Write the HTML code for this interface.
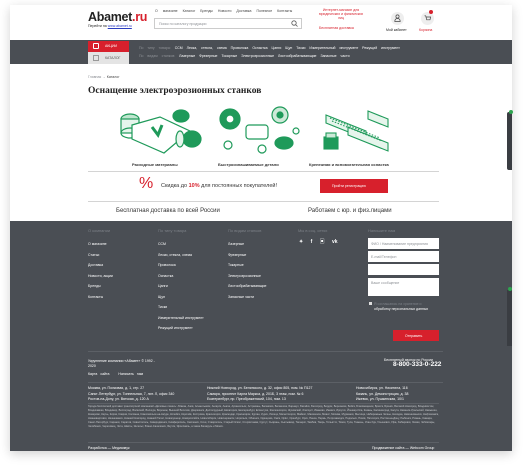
<!DOCTYPE html>
<html><head><meta charset="utf-8">
<style>
*{margin:0;padding:0;box-sizing:border-box}
body{width:524px;height:466px;background:#fff;position:relative;overflow:hidden;font-family:"Liberation Sans","Noto Sans CJK SC",sans-serif;color:#222}
.a{position:absolute;white-space:nowrap}
.card{position:absolute;left:10px;top:5px;width:502px;height:446px;background:#fff;box-shadow:0 3px 10px rgba(0,0,0,.18)}
.t3{font-size:3.5px}
.t4{font-size:4px}
.w{color:#fff}
.g{color:#8e9196}
.dark{background:#4a4e54}
</style></head><body>
<div class="card"></div>
<div class="a" style="left:88px;top:10px;font-size:12.5px;font-weight:bold;color:#222;letter-spacing:-.3px">Abamet<span style="color:#d7202c">.ru</span></div>
<div class="a t3" style="left:88px;top:24px">Перейти на <span style="color:#2a3cc0;text-decoration:underline">www.abamet.ru</span></div>
<div class="a t3" style="left:155px;top:9px;color:#444;word-spacing:4px">О магазине Каталог Бренды Новости Доставка Полезное Контакты</div>
<div class="a" style="left:154px;top:18px;width:148px;height:11px;border:1px solid #ccc"></div>
<div class="a t3 g" style="left:159px;top:22px">Поиск по каталогу продукции</div>
<svg class="a" style="left:291px;top:20px" width="7" height="7" viewBox="0 0 7 7"><circle cx="3" cy="3" r="2.2" fill="none" stroke="#555" stroke-width=".8"/><path d="M4.6 4.6L6.5 6.5" stroke="#555" stroke-width=".8"/></svg>
<div class="a t3" style="left:318px;top:8px;color:#d7202c;text-align:center;line-height:4px;width:46px;white-space:normal">Интернет-магазин для юридических и физических лиц</div>
<div class="a t3" style="left:319px;top:26px;color:#d7202c">Бесплатная доставка</div>
<div class="a" style="left:391px;top:12px;width:13px;height:13px;border-radius:50%;background:#eee"></div>
<svg class="a" style="left:394px;top:14px" width="7" height="8" viewBox="0 0 7 8"><circle cx="3.5" cy="2.5" r="1.6" fill="none" stroke="#444" stroke-width=".7"/><path d="M.8 7.5c0-2 1.2-3 2.7-3s2.7 1 2.7 3z" fill="none" stroke="#444" stroke-width=".7"/></svg>
<div class="a t3" style="left:386px;top:28px">Мой кабинет</div>
<div class="a" style="left:421px;top:12px;width:13px;height:13px;border-radius:50%;background:#eee"></div>
<div class="a" style="left:429px;top:10px;width:4px;height:4px;border-radius:50%;background:#d7202c"></div>
<svg class="a" style="left:424px;top:15px" width="7" height="7" viewBox="0 0 7 7"><path d="M.5 .8h1.2l1 4h3.3l.6-2.8H2" fill="none" stroke="#444" stroke-width=".7"/></svg>
<div class="a t3" style="left:419px;top:28px;color:#d7202c">Корзина</div>
<div class="a dark" style="left:10px;top:40px;width:502px;height:24px"></div>
<div class="a" style="left:88px;top:41px;width:41px;height:11px;background:#d7202c"></div>
<div class="a" style="left:93px;top:43px;width:6px;height:6px;border:.6px solid #fff;border-radius:1px"></div>
<div class="a t3 w" style="left:105px;top:44px">АКЦИИ</div>
<div class="a" style="left:88px;top:52px;width:41px;height:12px;background:#e4e4e4"></div>
<div class="a" style="left:93px;top:55px;width:6px;height:6px;border:.6px solid #999"></div>
<div class="a t3" style="left:105px;top:56px;color:#555">КАТАЛОГ</div>
<div class="a t3 w" style="left:139px;top:46px;word-spacing:3px"><span class="g">По типу товара:</span> CCM Леска, стекла, схема Проволока Оснастка Цанги Щуп Тиски Измерительный инструмент Режущий инструмент</div>
<div class="a t3 w" style="left:139px;top:54px;word-spacing:3px"><span class="g">По видам станков:</span> Лазерные Фрезерные Токарные Электроэрозионные Листообрабатывающие Запасные части</div>
<div class="a t3 g" style="left:88px;top:75px">Главная → <span style="color:#444">Каталог</span></div>
<div class="a" style="left:88px;top:86px;font-size:9.5px;font-weight:bold;font-family:'Liberation Serif',serif;color:#222">Оснащение электроэрозионных станков</div>
<svg class="a" style="left:118px;top:105px" width="85" height="52" viewBox="0 0 85 52" fill="none" stroke="#1f9a5a" stroke-width="1.2">
<ellipse cx="12" cy="14" rx="9" ry="5" fill="#bfe6cf"/><rect x="3" y="14" width="18" height="14" fill="#e6f5ec"/><ellipse cx="12" cy="28" rx="9" ry="5"/>
<path d="M14 20l28-8 30 14-26 22-32-14z" fill="#fff"/><path d="M34 22l6 8 4-10" stroke-width="3"/>
<ellipse cx="63" cy="11" rx="8" ry="6" fill="#1f9a5a"/><ellipse cx="74" cy="34" rx="9" ry="8" fill="#1f9a5a"/><ellipse cx="62" cy="34" rx="4" ry="8" fill="#e6f5ec"/></svg>
<svg class="a" style="left:218px;top:105px" width="85" height="52" viewBox="0 0 85 52" fill="none" stroke="#1f9a5a" stroke-width="1.2">
<ellipse cx="12" cy="14" rx="10" ry="10" fill="#1f9a5a"/><circle cx="12" cy="14" r="4" fill="#fff"/>
<rect x="28" y="20" width="22" height="14" rx="3"/><circle cx="62" cy="10" r="8" fill="#cde9d8"/><circle cx="62" cy="10" r="3" fill="#1f9a5a"/>
<ellipse cx="66" cy="38" rx="9" ry="6" fill="#1f9a5a"/><circle cx="10" cy="40" r="4"/><circle cx="44" cy="44" r="4"/><circle cx="78" cy="26" r="3"/></svg>
<svg class="a" style="left:318px;top:105px" width="85" height="52" viewBox="0 0 85 52" fill="none" stroke="#1f9a5a" stroke-width="1.1">
<path d="M8 10l40 16v8L8 18z" fill="#e6f5ec"/><path d="M30 22l40 16v8L30 30z" fill="#e6f5ec"/><path d="M50 6l20 8v8l-20-8z" fill="#e6f5ec"/>
<path d="M12 13l50 20M14 16l50 20" stroke-dasharray="1.5 1.5"/><rect x="6" y="32" width="14" height="12" fill="#1f9a5a"/><rect x="8" y="28" width="10" height="5" fill="#cde9d8"/></svg>
<div class="a t4" style="left:132px;top:162px;color:#333;font-weight:bold">Расходные материалы</div>
<div class="a t4" style="left:218px;top:162px;color:#333;font-weight:bold">Быстроизнашиваемые детали</div>
<div class="a t4" style="left:309px;top:162px;color:#333;font-weight:bold">Крепежная и вспомогательная оснастка</div>
<div class="a" style="left:88px;top:171px;width:351px;height:1px;background:#d4d4d4"></div>
<div class="a" style="left:139px;top:175px;font-size:16px;color:#d7202c">%</div>
<div class="a" style="left:161px;top:183px;font-size:5.5px;color:#333">Скидка до <b style="color:#d7202c">10%</b> для постоянных покупателей!</div>
<div class="a" style="left:320px;top:179px;width:68px;height:14px;background:#d7202c"></div>
<div class="a t3 w" style="left:332px;top:184px">Пройти регистрацию</div>
<div class="a" style="left:88px;top:201px;width:351px;height:1px;background:#d4d4d4"></div>
<div class="a" style="left:116px;top:208px;font-size:6px;color:#333">Бесплатная доставка по всей России</div>
<div class="a" style="left:308px;top:208px;font-size:6px;color:#333">Работаем с юр. и физ.лицами</div>
<div class="a dark" style="left:10px;top:221px;width:502px;height:230px"></div>
<div class="a t4" style="left:88px;top:228px;color:#7c8087">О компании</div>
<div class="a t4" style="left:158px;top:228px;color:#7c8087">По типу товара</div>
<div class="a t4" style="left:228px;top:228px;color:#7c8087">По видам станков</div>
<div class="a t4" style="left:298px;top:228px;color:#7c8087">Мы в соц. сетях</div>
<div class="a t4" style="left:368px;top:228px;color:#7c8087">Напишите нам</div>
<div class="a t3 w" style="left:88px;top:239px;line-height:10.5px;white-space:pre">О магазине
Статьи
Доставка
Новости, акции
Бренды
Контакты</div>
<div class="a t3 w" style="left:158px;top:239px;line-height:10.5px;white-space:pre">CCM
Лески, стекла, схема
Проволока
Оснастка
Цанги
Щуп
Тиски
Измерительный инструмент
Режущий инструмент</div>
<div class="a t3 w" style="left:228px;top:239px;line-height:10.5px;white-space:pre">Лазерные
Фрезерные
Токарные
Электроэрозионные
Листообрабатывающие
Запасные части</div>
<div class="a w" style="left:299px;top:238px;font-size:5px;font-weight:bold;word-spacing:6px">✦ f ▣ vk</div>
<div class="a" style="left:368px;top:238px;width:71px;height:11px;background:#fff"></div>
<div class="a" style="left:368px;top:251px;width:71px;height:11px;background:#fff"></div>
<div class="a" style="left:368px;top:264px;width:71px;height:11px;background:#fff"></div>
<div class="a" style="left:368px;top:278px;width:71px;height:18px;background:#fff"></div>
<div class="a t3 g" style="left:371px;top:242px">ФИО / Наименование предприятия</div>
<div class="a t3 g" style="left:371px;top:255px">E-mail/Телефон</div>
<div class="a t3 g" style="left:371px;top:281px">Ваше сообщение</div>
<div class="a" style="left:369px;top:302px;width:3px;height:3px;background:#ddd"></div>
<div class="a t3" style="left:374px;top:302px;color:#7c8087">Я соглашаюсь на хранение и</div>
<div class="a t3 w" style="left:374px;top:307px">обработку персональных данных</div>
<div class="a" style="left:393px;top:330px;width:46px;height:11px;background:#d7202c"></div>
<div class="a t3 w" style="left:405px;top:334px">Отправить</div>
<div class="a" style="left:88px;top:351px;width:355px;height:1px;background:#5c6066"></div>
<div class="a t3 w" style="left:88px;top:359px;line-height:5px">Укрупнение компании «Абамет» © 1992 -<br>2020</div>
<div class="a t3 w" style="left:88px;top:372px;word-spacing:2px">Карта сайта &nbsp; Написать нам</div>
<div class="a t3 w" style="left:384px;top:358px">Бесплатный звонок по России</div>
<div class="a w" style="left:393px;top:361px;font-size:6.5px;font-weight:bold">8-800-333-0-222</div>
<div class="a" style="left:88px;top:382px;width:355px;height:1px;background:#5c6066"></div>
<div class="a t3 w" style="left:88px;top:386px;line-height:5.5px">Москва, ул. Полковая, д. 1, стр. 27<br>Санкт-Петербург, ул. Тоннельная, 7, лит. Л, офис 340<br>Ростов-на-Дону, ул. Вятская, д. 120 А</div>
<div class="a t3 w" style="left:207px;top:386px;line-height:5.5px">Нижний Новгород, ул. Белинского, д. 32, офис 805, пом. № П127<br>Самара, проспект Карла Маркса, д. 201Б, 3 этаж, пом. № 6<br>Екатеринбург, пр. Преображенский, 104, пом. 13</div>
<div class="a t3 w" style="left:356px;top:386px;line-height:5.5px">Новосибирск, ул. Никитина, 116<br>Казань, ул. Демонстрация, д. 38<br>Ижевск, ул. Пушкинская, 10/1</div>
<div class="a" style="left:88px;top:403px;width:351px;height:1px;background:#5c6066"></div>
<div class="a" style="left:88px;top:405px;width:351px;font-size:2.6px;line-height:4px;color:#c8cacd;white-space:normal;overflow:hidden;height:37px">Города бесплатной доставки транспортной компанией «Деловые линии»: Абакан, Азов, Альметьевск, Ангарск, Анапа, Архангельск, Астрахань, Балаково, Балашиха, Барнаул, Батайск, Белгород, Бердск, Березники, Бийск, Благовещенск, Братск, Брянск, Великий Новгород, Владивосток, Владикавказ, Владимир, Волгоград, Волжский, Вологда, Воронеж, Вышний Волочёк, Дзержинск, Долгопрудный, Евпатория, Екатеринбург, Ессентуки, Железногорск, Жуковский, Златоуст, Иваново, Ижевск, Иркутск, Йошкар-Ола, Казань, Калининград, Калуга, Каменск-Уральский, Камышин, Кемерово, Керчь, Киров, Ковров, Коломна, Комсомольск-на-Амуре, Копейск, Королёв, Кострома, Красногорск, Краснодар, Красноярск, Курган, Курск, Липецк, Магнитогорск, Майкоп, Махачкала, Миасс, Москва, Мурманск, Мытищи, Набережные Челны, Находка, Невинномысск, Нефтекамск, Нижневартовск, Нижнекамск, Нижний Новгород, Нижний Тагил, Новокузнецк, Новороссийск, Новосибирск, Новочеркасск, Норильск, Обнинск, Одинцово, Омск, Орёл, Оренбург, Орск, Пенза, Пермь, Петрозаводск, Подольск, Псков, Пятигорск, Ростов-на-Дону, Рыбинск, Рязань, Самара, Санкт-Петербург, Саранск, Саратов, Севастополь, Северодвинск, Симферополь, Смоленск, Сочи, Ставрополь, Старый Оскол, Стерлитамак, Сургут, Сызрань, Сыктывкар, Таганрог, Тамбов, Тверь, Тольятти, Томск, Тула, Тюмень, Улан-Удэ, Ульяновск, Уфа, Хабаровск, Химки, Чебоксары, Челябинск, Череповец, Чита, Шахты, Энгельс, Южно-Сахалинск, Якутск, Ярославль, а также Беларусь и Минск.</div>
<div class="a" style="left:88px;top:442px;width:351px;height:1px;background:#5c6066"></div>
<div class="a t3 w" style="left:88px;top:446px">Разработка — Медиазвук</div>
<div class="a t3 w" style="left:372px;top:446px">Продвижение сайта — Webcom Group</div>
<div class="a" style="left:507px;top:112px;width:5px;height:58px;background:#3a3d42;border-radius:2px 0 0 2px"></div>
<div class="a" style="left:509px;top:110px;width:4px;height:4px;border-radius:50%;background:#2ea44f"></div>
<div class="a" style="left:507px;top:290px;width:5px;height:56px;background:#3a3d42"></div>
<div class="a" style="left:508px;top:287px;width:4px;height:4px;border-radius:50%;background:#2ea44f"></div>
</body></html>
